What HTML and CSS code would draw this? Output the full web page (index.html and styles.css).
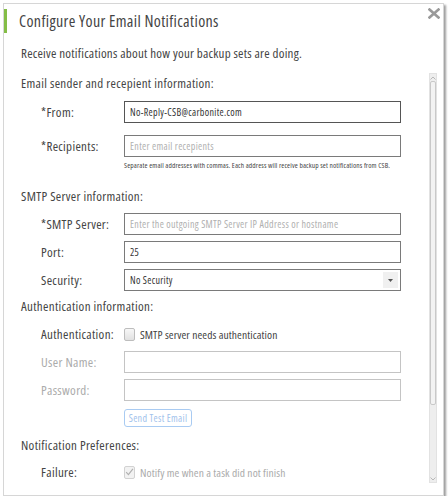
FILE: index.html
```html
<!DOCTYPE html>
<html>
<head>
<meta charset="utf-8">
<link rel="stylesheet" href="styles.css">
</head>
<body>
<div class="dialog">
  <div class="header">
    <span class="accent"></span>
    <h1 class="title">Configure Your Email Notifications</h1>
    <span class="close" aria-label="Close">
      <svg width="12" height="11" viewBox="0 0 12 11"><path d="M1.5 1.5 L10.5 9.5 M10.5 1.5 L1.5 9.5" stroke="#9a9a9a" stroke-width="2.6" stroke-linecap="square" fill="none"/></svg>
    </span>
  </div>
  <p class="intro">Receive notifications about how your backup sets are doing.</p>
  <div class="body">
    <div class="content">
      <h2 class="section-title">Email sender and recepient information:</h2>
      <div class="field field-first">
        <label class="label">*From:</label>
        <div class="input input-strong">No-Reply-CSB@carbonite.com</div>
      </div>
      <div class="field field-loose">
        <label class="label">*Recipients:</label>
        <div class="input placeholder">Enter email recepients</div>
      </div>
      <p class="hint">Separate email addresses with commas. Each address will receive backup set notifications from CSB.</p>

      <h2 class="section-title title-smtp">SMTP Server information:</h2>
      <div class="field field-first-tight">
        <label class="label">*SMTP Server:</label>
        <div class="input placeholder">Enter the outgoing SMTP Server IP Address or hostname</div>
      </div>
      <div class="field">
        <label class="label">Port:</label>
        <div class="input">25</div>
      </div>
      <div class="field">
        <label class="label">Security:</label>
        <div class="input select">
          <span class="select-value">No Security</span>
          <span class="select-arrow"><svg width="5" height="3" viewBox="0 0 5 3"><path d="M0 0 H5 L2.5 3 Z" fill="#555"/></svg></span>
        </div>
      </div>

      <h2 class="section-title title-auth">Authentication information:</h2>
      <div class="field field-auth">
        <label class="label">Authentication:</label>
        <span class="checkbox"></span>
        <span class="check-label">SMTP server needs authentication</span>
      </div>
      <div class="field">
        <label class="label label-disabled">User Name:</label>
        <div class="input input-disabled"></div>
      </div>
      <div class="field">
        <label class="label label-disabled">Password:</label>
        <div class="input input-disabled"></div>
      </div>
      <div class="button-row">
        <span class="button">Send Test Email</span>
      </div>

      <h2 class="section-title title-notif">Notification Preferences:</h2>
      <div class="field field-failure">
        <label class="label">Failure:</label>
        <span class="checkbox checkbox-checked">
          <svg width="10" height="10" viewBox="0 0 10 10"><path d="M1.3 5.2 L3.8 8 L8.8 1.5" stroke="#b0b0b0" stroke-width="1.3" fill="none"/></svg>
        </span>
        <span class="check-label check-label-disabled">Notify me when a task did not finish</span>
      </div>
    </div>
    <div class="scrollbar">
      <span class="sb-arrow">
        <svg width="6" height="4" viewBox="0 0 6 4"><path d="M0.5 3.5 L3 1 L5.5 3.5" stroke="#b8b8b8" stroke-width="1" fill="none"/></svg>
      </span>
      <span class="sb-thumb"></span>
      <span class="sb-rest"></span>
      <span class="sb-arrow">
        <svg width="6" height="4" viewBox="0 0 6 4"><path d="M0.5 0.5 L3 3 L5.5 0.5" stroke="#b8b8b8" stroke-width="1" fill="none"/></svg>
      </span>
    </div>
  </div>
</div>
</body>
</html>
```
FILE: styles.css
```css
html, body {
  margin: 0;
  padding: 0;
  background: #ffffff;
}

body {
  font-family: "Open Sans", "Liberation Sans", sans-serif;
  font-stretch: 75%;
  letter-spacing: 0.02em;
  color: #444444;
}

.dialog {
  margin: 3px 0 0 3px;
  width: 441px;
  height: 493px;
  box-sizing: border-box;
  border: 1px solid #d6d6d6;
  background: #ffffff;
  box-shadow: 2px 2px 2px rgba(0, 0, 0, 0.38);
  display: flex;
  flex-direction: column;
}

.header {
  display: flex;
  align-items: flex-start;
  height: 29px;
  flex: none;
}

.accent {
  display: block;
  width: 3px;
  height: 24px;
  margin-top: 5px;
  background: #84bd46;
  flex: none;
}

.title {
  margin: 5px 0 0 12px;
  font-size: 16px;
  letter-spacing: 0.36px;
  font-weight: normal;
  line-height: 24px;
  color: #444444;
  white-space: nowrap;
}

.close {
  margin: 4px 3px 0 auto;
  display: block;
  width: 12px;
  height: 11px;
}

.close svg {
  display: block;
}

.intro {
  margin: 12px 0 10px 17px;
  font-size: 13px;
  letter-spacing: 0.24px;
  line-height: 16px;
  flex: none;
  white-space: nowrap;
}

.body {
  flex: 1;
  min-height: 0;
  display: flex;
}

.content {
  flex: 1;
  min-width: 0;
  overflow: hidden;
  padding: 4px 0 0 17px;
}

.section-title {
  margin: 0;
  font-size: 13px;
  font-weight: normal;
  line-height: 16px;
  white-space: nowrap;
}

.title-smtp {
  margin-top: 18px;
}

.title-auth {
  margin-top: 7px;
}

.title-notif {
  margin-top: 10px;
}

.field {
  display: flex;
  align-items: center;
  height: 22px;
  padding-left: 20px;
  margin-top: 6px;
}

.field-first {
  margin-top: 10px;
}

.field-loose {
  margin-top: 12px;
}

.field-first-tight {
  margin-top: 9px;
}

.field-auth {
  margin-top: 9px;
}

.field-failure {
  margin-top: 8px;
}

.label {
  width: 83px;
  flex: none;
  font-size: 13px;
  white-space: nowrap;
}

.label-disabled {
  color: #ababab;
}

.input {
  box-sizing: border-box;
  width: 277px;
  height: 22px;
  border: 1px solid #7a7a7a;
  padding-left: 5px;
  font-size: 10px;
  line-height: 20px;
  color: #333333;
  white-space: nowrap;
  overflow: hidden;
}

.input-strong {
  border-color: #555555;
}

.placeholder {
  color: #b0b0b0;
}

.input-disabled {
  border-color: #c4c4c4;
}

.select {
  display: flex;
  align-items: stretch;
  padding-right: 0;
}

.select-value {
  flex: 1;
}

.select-arrow {
  width: 15px;
  margin: 2px 2px 2px 0;
  background: #f0f0f0;
  display: flex;
  align-items: center;
  justify-content: center;
}

.select-arrow svg {
  display: block;
}

.hint {
  margin: 4px 0 0 103px;
  font-size: 7.4px;
  letter-spacing: 0.12px;
  line-height: 9px;
  color: #444444;
  white-space: nowrap;
}

.checkbox {
  box-sizing: border-box;
  width: 11px;
  height: 13px;
  border: 1px solid #bdbdbd;
  border-radius: 2px;
  background: linear-gradient(#f7f7f7, #e1e1e1);
  flex: none;
  display: flex;
  align-items: center;
  justify-content: center;
}

.checkbox-checked {
  background: #f2f2f2;
  border-color: #d2d2d2;
}

.checkbox svg {
  display: block;
}

.check-label {
  margin-left: 5px;
  font-size: 11.5px;
  letter-spacing: 0.1px;
  white-space: nowrap;
}

.check-label-disabled {
  color: #ababab;
}

.button-row {
  margin-top: 8px;
  padding-left: 103px;
  height: 18px;
  display: flex;
}

.button {
  box-sizing: border-box;
  width: 68px;
  height: 18px;
  border: 1px solid #a9cbf2;
  border-radius: 3px;
  font-size: 10px;
  line-height: 16px;
  text-align: center;
  color: #9fc2ec;
  background: #ffffff;
}

.scrollbar {
  width: 8px;
  margin: 2px 6px 12px 0;
  box-sizing: border-box;
  border: 1px solid #e2e2e2;
  background: #eeeeee;
  display: flex;
  flex-direction: column;
  align-items: center;
  flex: none;
}

.sb-arrow {
  height: 7px;
  display: flex;
  align-items: center;
  justify-content: center;
  flex: none;
}

.sb-arrow svg {
  display: block;
}

.sb-thumb {
  width: 6px;
  height: 324px;
  box-sizing: border-box;
  border: 1px solid #c9c9c9;
  border-radius: 2px;
  background: #f3f3f3;
  flex: none;
}

.sb-rest {
  flex: 1;
}
```
